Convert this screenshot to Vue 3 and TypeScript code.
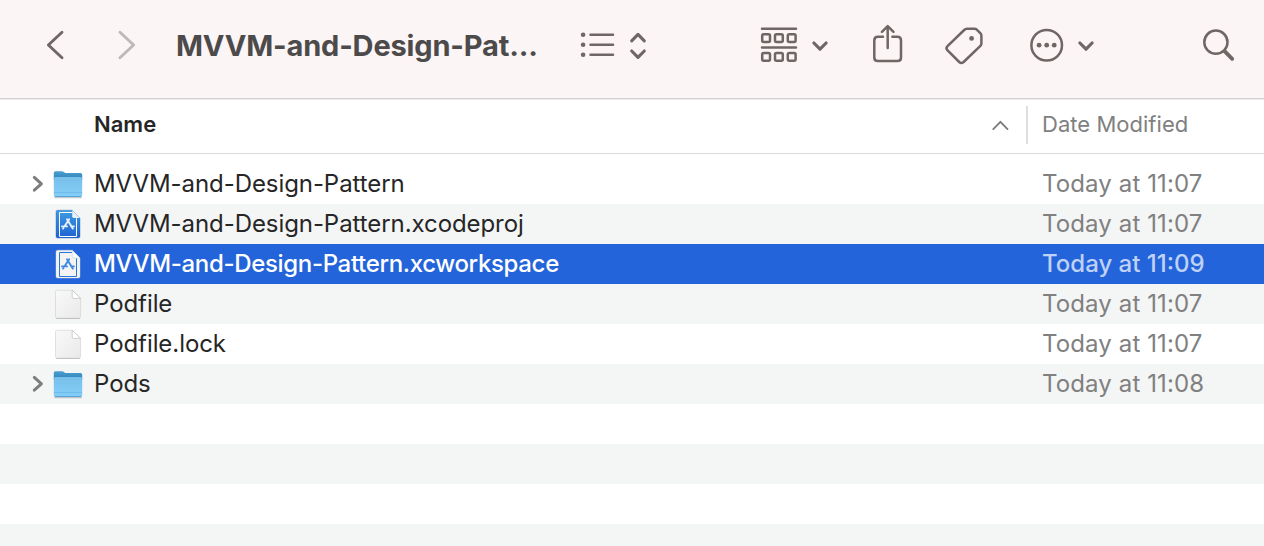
<script setup lang="ts">
type Kind = 'folder' | 'project' | 'workspace' | 'document'

interface Entry {
  name: string
  date: string
  kind: Kind
  selected?: boolean
}

const entries: Entry[] = [
  { name: 'MVVM-and-Design-Pattern', date: 'Today at 11:07', kind: 'folder' },
  { name: 'MVVM-and-Design-Pattern.xcodeproj', date: 'Today at 11:07', kind: 'project' },
  { name: 'MVVM-and-Design-Pattern.xcworkspace', date: 'Today at 11:09', kind: 'workspace', selected: true },
  { name: 'Podfile', date: 'Today at 11:07', kind: 'document' },
  { name: 'Podfile.lock', date: 'Today at 11:07', kind: 'document' },
  { name: 'Pods', date: 'Today at 11:08', kind: 'folder' },
]
const emptyRows = 4
</script>

<template>
  <div class="window">
    <header class="toolbar">
      <svg class="back" width="24" height="34" viewBox="43 28 24 34"><path d="M62 32.2 48.4 45 62 57.8" /></svg>
      <svg class="forward" width="24" height="34" viewBox="115 28 24 34"><path d="M120 32.2 133.6 45 120 57.8" /></svg>
      <h1 class="title">MVVM-and-Design-Pat...</h1>
      <svg class="list" width="68" height="34" viewBox="580 28 68 34">
        <g class="solid"><circle cx="583.1" cy="34.8" r="2.3" /><circle cx="583.1" cy="44.8" r="2.3" /><circle cx="583.1" cy="54.8" r="2.3" /></g>
        <path d="M590.5 34.8H613M590.5 44.8H613M590.5 54.8H613" />
        <path class="bold" d="M631.7 40.8 638 34.4 644.3 40.8M631.7 51 638 57.4 644.3 51" />
      </svg>
      <svg class="group" width="72" height="40" viewBox="758 25 72 40">
        <path d="M762 28.7H796M762 47.4H796" />
        <g v-for="y in [34.2, 53]" :key="y">
          <rect v-for="x in [762.2, 775, 787.8]" :key="x" :x="x" :y="y" width="7.8" height="7.8" rx="1.5" />
        </g>
        <path class="chev" d="M813.9 43 820 49.2 826.1 43" />
      </svg>
      <svg class="share" width="32" height="42" viewBox="872 23 32 42">
        <path d="M883 36.8H878Q874.3 36.8 874.3 40.5V57.4Q874.3 61 878 61H897.4Q901 61 901 57.4V40.5Q901 36.8 897.4 36.8H892.4M887.7 48V26.4M881.9 31.9 887.7 26.1 893.5 31.9" />
      </svg>
      <svg class="tag" width="40" height="42" viewBox="944 24 40 42">
        <path d="M967 28.8H974.5Q976 28.8 977 29.8L980.3 33.2Q981.4 34.3 981.4 35.8V43.5Q981.4 44.8 980.4 45.8L963.6 62Q961.3 64 959.2 62L947.6 50.4Q945.4 48.2 947.5 46.1L964.2 30Q965.4 28.8 967 28.8Z" />
        <circle class="solid" cx="971.6" cy="38.4" r="2.4" />
      </svg>
      <svg class="more" width="68" height="38" viewBox="1028 26 68 38">
        <circle cx="1046.7" cy="45.2" r="15.3" />
        <g class="solid"><circle cx="1039.1" cy="45.2" r="2.4" /><circle cx="1046.7" cy="45.2" r="2.4" /><circle cx="1054.2" cy="45.2" r="2.4" /></g>
        <path class="chev" d="M1079.9 43 1086 49.2 1092.1 43" />
      </svg>
      <svg class="search" width="36" height="38" viewBox="1200 26 36 38">
        <circle cx="1215.9" cy="42.2" r="11.6" />
        <path class="handle" d="M1224.8 51.4 1232.2 58.8" />
      </svg>
    </header>

    <div class="columns">
      <span class="col-name">Name</span>
      <svg class="sort" width="18" height="12" viewBox="992 120 18 12"><path d="M993.3 130.1 1000.4 122.8 1007.5 130.1" /></svg>
      <span class="divider"></span>
      <span class="col-date">Date Modified</span>
    </div>

    <main class="rows">
      <div v-for="entry in entries" :key="entry.name" class="row" :class="{ selected: entry.selected }">
        <span class="disclosure">
          <svg v-if="entry.kind === 'folder'" width="14" height="18" viewBox="0 0 14 18"><path d="M3.3 2.4 10.4 8.8 3.3 15.2" /></svg>
        </span>
        <span class="icon">
          <svg v-if="entry.kind === 'folder'" width="32" height="32" viewBox="0 0 32 32">
            <defs>
              <linearGradient id="folder-back" x1="0" y1="0" x2="0" y2="1">
                <stop offset="0" stop-color="#4a9fd0" /><stop offset="1" stop-color="#2e80b8" />
              </linearGradient>
              <linearGradient id="folder-front" x1="0" y1="0" x2="0" y2="1">
                <stop offset="0" stop-color="#78bfe8" /><stop offset="1" stop-color="#83cffb" />
              </linearGradient>
            </defs>
            <path d="M2.4 29.6H29.8" stroke="#8b979c" stroke-opacity=".5" stroke-width="1.3" />
            <path d="M1.8 4.8Q1.8 3.2 3.4 3.2H9.8Q11 3.2 11.9 4L13.2 5H28.5Q30.2 5 30.2 6.7V12H1.8Z" fill="url(#folder-back)" />
            <path d="M1.8 10.6Q1.8 9 3.5 9H28.5Q30.2 9 30.2 10.6V27.2Q30.2 28.9 28.5 28.9H3.5Q1.8 28.9 1.8 27.2Z" fill="url(#folder-front)" />
            <path d="M2 24.6H30" stroke="#6db5e2" stroke-width=".8" />
            <path d="M2.8 28.5H29.2" stroke="#559fd0" stroke-width=".9" />
          </svg>
          <svg v-else-if="entry.kind === 'document'" width="32" height="32" viewBox="0 0 32 32">
            <defs>
              <linearGradient id="paper" x1="0" y1="0" x2="1" y2="1">
                <stop offset="0" stop-color="#f9f9f9" /><stop offset="1" stop-color="#e9e9e9" />
              </linearGradient>
            </defs>
            <path d="M5 2.2H20.4L28.6 10.4V28.5Q28.6 30.2 27 30.2H5.2Q3.5 30.2 3.5 28.5V4Q3.5 2.2 5 2.2Z" fill="url(#paper)" stroke="#cfcfcf" stroke-width=".6" />
            <path d="M4.4 30.5H27.8" stroke="#b8b8b8" stroke-width=".8" />
            <path d="M20.2 2.2V9Q20.2 10.4 21.6 10.4H28.6Z" fill="#fff" stroke="#bdbdbd" stroke-width=".7" />
          </svg>
          <svg v-else width="32" height="32" viewBox="0 0 32 32" :class="entry.kind">
            <defs>
              <linearGradient id="project-fill" x1="0" y1="0" x2="0" y2="1">
                <stop offset="0" stop-color="#3f9cdf" /><stop offset="1" stop-color="#1e62d2" />
              </linearGradient>
            </defs>
            <path class="sheet" d="M5.6 2.2H20.2L28 10V28.3Q28 30 26.4 30H5.6Q4 30 4 28.3V3.8Q4 2.2 5.6 2.2Z" />
            <path class="frame" d="M20 4.5H7.5V28.5H24.5V10.3" />
            <path class="fold" d="M20.2 2.2V8.6Q20.2 10 21.6 10H28Z" />
            <path class="glyph" d="M17.2 11.2 12.4 18.6M15 11.2 20.8 20.6M10 18.4H15M19.2 18.4H21.9M11 20.6 11.4 20.2" />
          </svg>
        </span>
        <span class="name">{{ entry.name }}</span>
        <span class="date">{{ entry.date }}</span>
      </div>
      <div v-for="n in emptyRows" :key="n" class="row"></div>
    </main>
  </div>
</template>

<style>
body { overflow: hidden; }
</style>

<style scoped>
.window {
  width: 1264px;
  height: 546px;
  overflow: hidden;
  background: #fff;
  font-family: Inter, "Liberation Sans", sans-serif;
}
svg { display: block; flex: none; fill: none; overflow: visible; }
.toolbar {
  display: flex;
  align-items: center;
  box-sizing: border-box;
  height: 100px;
  padding: 0 28px 9px 43px;
  background: #fbf5f5;
  border-bottom: 1px solid #ececec;
  box-shadow: inset 0 -1px #d5d1d1;
}
.toolbar svg { stroke: #6e6766; stroke-width: 2.5; stroke-linecap: round; stroke-linejoin: round; }
.toolbar .solid { fill: #6e6766; stroke: none; }
.toolbar .back, .toolbar .forward { stroke-width: 2.9; }
.toolbar .bold { stroke-width: 3.1; }
.toolbar .chev { stroke-width: 3.2; }
.toolbar .handle { stroke-width: 3.8; }
.forward { margin-left: 48px; }
.toolbar .forward { stroke: #beb8b8; }
.title {
  width: 404px;
  margin: 0 0 0 37px;
  padding-top: 2px;
  color: #4c4a4a;
  font-size: 29px;
  font-weight: 700;
  letter-spacing: -0.16px;
  line-height: 36px;
  white-space: nowrap;
}
.list { margin-right: 110px; }
.group { margin-right: 42px; }
.share { margin: 0 40px 2px 0; }
.tag { margin-right: 44px; }
.more { margin-right: 104px; }
.columns {
  display: flex;
  align-items: center;
  box-sizing: border-box;
  height: 54px;
  padding: 0 0 4px 94px;
  border-bottom: 1px solid #dadada;
  font-size: 22px;
  line-height: 28px;
}
.col-name { flex: none; width: 898px; padding-bottom: 2px; color: #262626; font-weight: 600; }
.sort { margin-top: 1px; stroke: #7c7c7c; stroke-width: 1.9; stroke-linecap: round; stroke-linejoin: round; }
.divider { width: 2px; height: 38px; margin: 0 14px 0 16px; background: #dfdfdf; }
.col-date { padding-bottom: 2px; color: #808080; letter-spacing: 0.03px; }
.rows { padding-top: 10px; }
.row { display: flex; align-items: center; height: 40px; color: #262626; font-size: 24px; line-height: 40px; white-space: nowrap; }
.row:nth-child(even) { background: #f4f5f5; }
.row.selected { background: #2464da; color: #fff; font-weight: 500; }
.disclosure { width: 21px; margin-left: 31px; stroke: #7d7d7d; stroke-width: 3; stroke-linecap: round; stroke-linejoin: round; }
.icon { width: 42px; height: 36px; display: flex; align-items: center; }
.name { width: 948px; letter-spacing: -0.07px; }
.selected .name { letter-spacing: -0.34px; }
.date { color: #808080; letter-spacing: 0.12px; }
.selected .date { color: #bfd1f5; letter-spacing: 0; }
.sheet { fill: url(#project-fill); stroke: #2467bb; stroke-width: .4; }
.frame { stroke: #fff; stroke-width: 1; }
.fold { fill: #e9f0f7; }
.glyph { stroke: #e8f2fd; stroke-width: 1.9; stroke-linecap: round; }
.workspace .sheet { fill: #f3f3f4; stroke: #ddd; }
.workspace .frame { stroke: #2679d8; }
.workspace .fold { fill: #fff; stroke: #c6ccd5; stroke-width: .6; }
.workspace .glyph { stroke: #3c8ae2; }
</style>
